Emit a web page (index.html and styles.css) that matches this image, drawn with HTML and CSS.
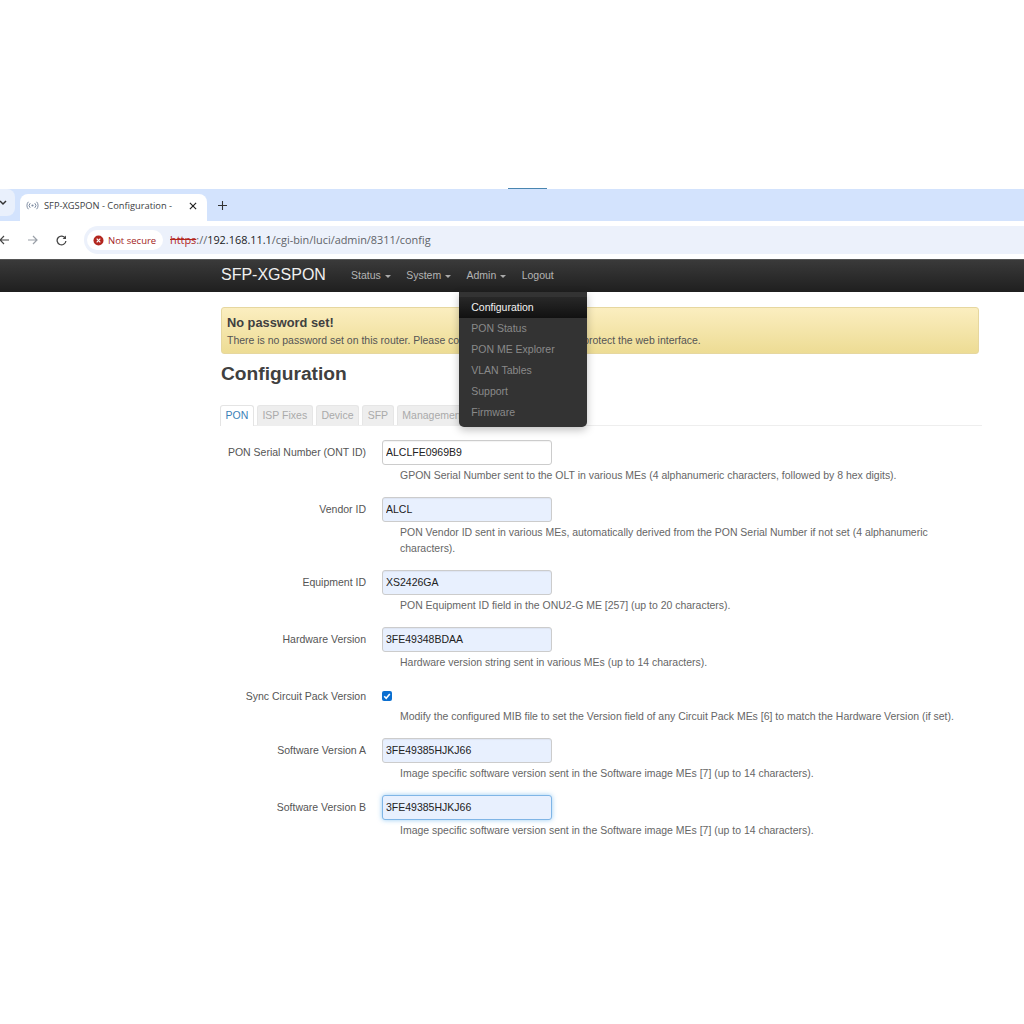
FILE: index.html
```html
<!DOCTYPE html>
<html lang="en">
<head>
<meta charset="utf-8">
<title>SFP-XGSPON - Configuration</title>
<link rel="stylesheet" href="styles.css">
</head>
<body>
<div class="loadbar"></div>
<div class="tabstrip">
  <div class="tabsearch">
    <svg class="ico-chev" width="8" height="6" viewBox="0 0 8 6"><path d="M1 1l3 3 3-3" fill="none" stroke="#333" stroke-width="1.5"/></svg>
  </div>
  <div class="tab">
    <svg class="favicon" width="13" height="9" viewBox="0 0 13 9"><circle cx="6.5" cy="4.5" r="1.1" fill="#7c8aa0"/><path d="M4.2 2.2a3.2 3.2 0 0 0 0 4.6M8.8 2.2a3.2 3.2 0 0 1 0 4.6M2.4.8a5.4 5.4 0 0 0 0 7.4M10.6.8a5.4 5.4 0 0 1 0 7.4" fill="none" stroke="#7c8aa0" stroke-width="1"/></svg>
    <span class="tab-title">SFP-XGSPON - Configuration -</span>
    <svg class="tab-close" width="8" height="8" viewBox="0 0 9 9"><path d="M1 1l7 7M8 1L1 8" stroke="#222" stroke-width="1.3"/></svg>
  </div>
  <svg class="newtab" width="9" height="9" viewBox="0 0 10 10"><path d="M5 0v10M0 5h10" stroke="#333" stroke-width="1.2"/></svg>
</div>
<div class="toolbar">
  <div class="navbtns">
    <svg width="10" height="10" viewBox="0 0 10 10" class="ico-back"><path d="M10 5H1.5M5 1L1 5l4 4" fill="none" stroke="#444" stroke-width="1.2"/></svg>
    <svg width="10" height="10" viewBox="0 0 10 10" class="ico-fwd"><path d="M0 5h8.5M5 1l4 4-4 4" fill="none" stroke="#9aa0a8" stroke-width="1.2"/></svg>
    <svg width="11" height="11" viewBox="0 0 11 11" class="ico-reload"><path d="M9.3 3.2A4.4 4.4 0 1 0 9.9 6" fill="none" stroke="#444" stroke-width="1.3"/><path d="M10 .6v3.4H6.6z" fill="#444"/></svg>
  </div>
  <div class="omnibox">
    <div class="chip">
      <svg width="11" height="11" viewBox="0 0 11 11"><circle cx="5.5" cy="5.5" r="5" fill="#b3261e"/><path d="M3.7 3.7l3.6 3.6M7.3 3.7L3.7 7.3" stroke="#fff" stroke-width="1.2"/></svg>
      <span class="chip-text">Not secure</span>
    </div>
    <div class="url"><span class="url-scheme">https</span><span class="url-sep">://</span>192.168.11.1<span class="url-path">/cgi-bin/luci/admin/8311/config</span></div>
  </div>
</div>
<nav class="navbar">
  <a class="brand">SFP-XGSPON</a>
  <ul class="menu">
    <li class="menu-item">Status<span class="caret"></span></li>
    <li class="menu-item">System<span class="caret"></span></li>
    <li class="menu-item menu-open">Admin<span class="caret"></span>
      <ul class="dropdown">
        <li class="drop-item drop-active">Configuration</li>
        <li class="drop-item">PON Status</li>
        <li class="drop-item">PON ME Explorer</li>
        <li class="drop-item">VLAN Tables</li>
        <li class="drop-item">Support</li>
        <li class="drop-item">Firmware</li>
      </ul>
    </li>
    <li class="menu-item">Logout</li>
  </ul>
</nav>
<main class="content">
  <div class="alert">
    <strong class="alert-title">No password set!</strong>
    <p class="alert-text">There is no password set on this router. Please configure a root password to protect the web interface.</p>
  </div>
  <h2 class="page-title">Configuration</h2>
  <ul class="tabs">
    <li class="tabitem tab-active">PON</li>
    <li class="tabitem">ISP Fixes</li>
    <li class="tabitem">Device</li>
    <li class="tabitem">SFP</li>
    <li class="tabitem">Management</li>
  </ul>
  <form class="form">
    <div class="row">
      <label class="row-label">PON Serial Number (ONT ID)</label>
      <div class="row-field">
        <input class="text" type="text" value="ALCLFE0969B9">
        <p class="help">GPON Serial Number sent to the OLT in various MEs (4 alphanumeric characters, followed by 8 hex digits).</p>
      </div>
    </div>
    <div class="row">
      <label class="row-label">Vendor ID</label>
      <div class="row-field">
        <input class="text filled" type="text" value="ALCL">
        <p class="help">PON Vendor ID sent in various MEs, automatically derived from the PON Serial Number if not set (4 alphanumeric characters).</p>
      </div>
    </div>
    <div class="row">
      <label class="row-label">Equipment ID</label>
      <div class="row-field">
        <input class="text filled" type="text" value="XS2426GA">
        <p class="help">PON Equipment ID field in the ONU2-G ME [257] (up to 20 characters).</p>
      </div>
    </div>
    <div class="row">
      <label class="row-label">Hardware Version</label>
      <div class="row-field">
        <input class="text filled" type="text" value="3FE49348BDAA">
        <p class="help">Hardware version string sent in various MEs (up to 14 characters).</p>
      </div>
    </div>
    <div class="row row-check">
      <label class="row-label">Sync Circuit Pack Version</label>
      <div class="row-field">
        <span class="check"><svg width="10" height="10" viewBox="0 0 10 10"><path d="M2.2 5.2l2 2 3.6-4.2" fill="none" stroke="#fff" stroke-width="1.6"/></svg></span>
        <p class="help">Modify the configured MIB file to set the Version field of any Circuit Pack MEs [6] to match the Hardware Version (if set).</p>
      </div>
    </div>
    <div class="row">
      <label class="row-label">Software Version A</label>
      <div class="row-field">
        <input class="text filled" type="text" value="3FE49385HJKJ66">
        <p class="help">Image specific software version sent in the Software image MEs [7] (up to 14 characters).</p>
      </div>
    </div>
    <div class="row">
      <label class="row-label">Software Version B</label>
      <div class="row-field">
        <input class="text filled focused" type="text" value="3FE49385HJKJ66">
        <p class="help">Image specific software version sent in the Software image MEs [7] (up to 14 characters).</p>
      </div>
    </div>
  </form>
</main>
</body>
</html>
```
FILE: styles.css
```css
* { box-sizing: border-box; }
html, body { margin: 0; padding: 0; background: #fff; }
body {
  width: 1024px;
  height: 1024px;
  overflow: hidden;
  padding-top: 188px;
  font-family: "Liberation Sans", Arial, sans-serif;
  color: #444;
}
ul { list-style: none; margin: 0; padding: 0; }
p { margin: 0; }

.loadbar { width: 39px; height: 1px; margin-left: 508px; background: #4a86b0; }

.tabstrip {
  height: 32px;
  background: #d3e3fd;
  display: flex;
  align-items: flex-end;
}
.tabsearch {
  width: 15px;
  height: 27px;
  margin-bottom: 5px;
  background: #e9f0fc;
  border-radius: 0 8px 8px 0;
  display: flex;
  align-items: center;
}
.ico-chev { margin-left: -1px; }
.tab {
  width: 187px;
  height: 27px;
  margin-left: 5px;
  padding: 0 0 4px 6px;
  background: #fff;
  border-radius: 8px 8px 0 0;
  display: flex;
  align-items: center;
}
.favicon { flex: none; }
.tab-title {
  margin-left: 5px;
  width: 130px;
  white-space: nowrap;
  overflow: hidden;
  font-family: "Open Sans", "Liberation Sans", sans-serif;
  font-size: 9.3px;
  color: #3c4043;
}
.tab-close { margin-left: 15px; flex: none; }
.newtab { margin: 0 0 11px 11px; flex: none; }

.toolbar {
  height: 38px;
  display: flex;
  align-items: flex-start;
  padding-top: 5px;
}
.navbtns {
  width: 84px;
  height: 28px;
  display: flex;
  align-items: center;
  flex: none;
}
.ico-back { margin-left: -1px; }
.ico-fwd { margin-left: 19px; }
.ico-reload { margin-left: 18px; }
.omnibox {
  flex: 1;
  height: 28px;
  background: #ecf1fb;
  border-radius: 14px 0 0 14px;
  display: flex;
  align-items: center;
  padding-left: 3px;
}
.chip {
  width: 76px;
  height: 20px;
  background: #fff;
  border-radius: 10px;
  display: flex;
  align-items: center;
  padding-left: 6px;
  flex: none;
}
.chip-text {
  margin-left: 4px;
  font-family: "Open Sans", "Liberation Sans", sans-serif;
  font-size: 9.5px;
  color: #a3241c;
  white-space: nowrap;
}
.url {
  margin-left: 7px;
  font-family: "Open Sans", "Liberation Sans", sans-serif;
  font-size: 10.9px;
  color: #202124;
  white-space: nowrap;
  padding-bottom: 2px;
}
.url-scheme { color: #b3261e; text-decoration: line-through; }
.url-sep, .url-path { color: #5f6368; }

.navbar {
  height: 33px;
  padding: 0 0 2px 221px;
  background: linear-gradient(#3a3a3a, #1f1f1f);
  border-top: 1px solid #555;
  display: flex;
  align-items: center;
}
.brand { font-size: 16px; color: #f0f0f0; width: 122.3px; flex: none; }
.menu { display: flex; }
.menu-item {
  position: relative;
  font-size: 10.5px;
  color: #b4b4b4;
  padding: 0 7.7px;
  line-height: 30px;
  white-space: nowrap;
}
.caret {
  display: inline-block;
  width: 0;
  height: 0;
  margin-left: 4px;
  vertical-align: middle;
  border-left: 3px solid transparent;
  border-right: 3px solid transparent;
  border-top: 3px solid #aaa;
}
.dropdown {
  position: absolute;
  z-index: 5;
  top: 32px;
  left: 0.4px;
  width: 127.5px;
  height: 135px;
  padding-top: 5px;
  background: #333;
  border-radius: 0 0 5px 5px;
  box-shadow: 0 3px 8px rgba(0,0,0,.25);
}
.drop-item {
  height: 21px;
  line-height: 21px;
  padding-left: 12px;
  font-size: 10.5px;
  color: #8a8a8a;
}
.drop-active { background: linear-gradient(#282828, #111); color: #f2f2f2; }

.content { padding: 15px 0 0 221px; }
.alert {
  width: 758px;
  height: 47px;
  padding: 8px 5px 0;
  background: linear-gradient(#fbeec0, #eddc94);
  border: 1px solid #e6d79f;
  border-radius: 3px;
}
.alert-title { display: block; font-size: 12.8px; line-height: 14px; color: #404040; }
.alert-text { margin-top: 4px; font-size: 10.47px; line-height: 14px; color: #555; white-space: nowrap; }

.page-title {
  margin: 7px 0 0;
  height: 24px;
  line-height: 26px;
  font-size: 19.2px;
  color: #404040;
}
.tabs {
  display: flex;
  gap: 3.2px;
  width: 762px;
  height: 21px;
  margin: 20px 0 0 -1px;
  border-bottom: 1px solid #eee;
}
.tabitem {
  height: 20px;
  padding: 0 4.5px;
  line-height: 18px;
  font-size: 10.5px;
  color: #aaa;
  background: #eee;
  border: 1px solid #e6e6e6;
  border-bottom: 0;
  border-radius: 3px 3px 0 0;
}
.tab-active { height: 21px; color: #3b7fb8; background: #fff; border-color: #e4e4e4; }

.form { margin-top: 14px; }
.row { display: flex; padding-bottom: 13px; }
.row-label {
  width: 145px;
  flex: none;
  text-align: right;
  font-size: 10.5px;
  line-height: 25px;
  color: #555;
  white-space: nowrap;
}
.row-field { margin-left: 16px; width: 590px; }
.text {
  display: block;
  width: 170px;
  height: 25px;
  padding: 0 3px 1px;
  font-family: "Liberation Sans", Arial, sans-serif;
  font-size: 10.5px;
  color: #222;
  background: #fff;
  border: 1px solid #ccc;
  border-radius: 3px;
  box-shadow: inset 0 1px 1px rgba(0,0,0,.05);
  outline: 0;
}
.filled { background: #e8f0fe; }
.focused {
  border-color: #7fb5e6;
  box-shadow: 0 0 5px rgba(82,168,236,.6);
}
.check {
  display: flex;
  align-items: center;
  justify-content: center;
  width: 10px;
  height: 10px;
  margin-top: 7px;
  background: #0b6fd0;
  border-radius: 2px;
}
.help {
  margin: 3px 0 0 18px;
  font-size: 10.48px;
  line-height: 16px;
  color: #666;
}
.row-check .help { margin-top: 8px; }
```
